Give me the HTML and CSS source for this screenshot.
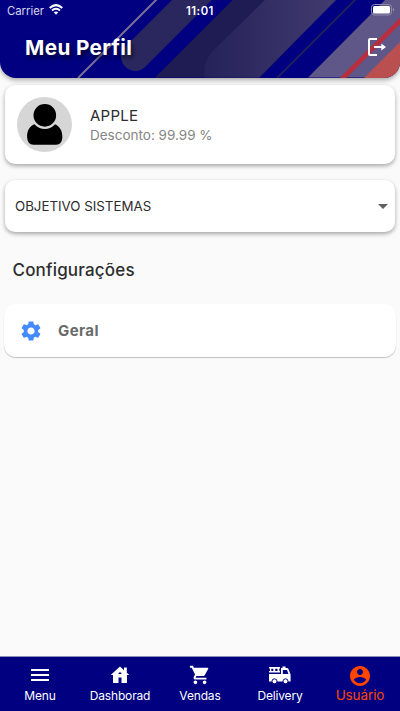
FILE: index.html
```html
<!DOCTYPE html>
<html lang="pt-BR">
<head>
<meta charset="utf-8">
<title>Meu Perfil</title>
<link rel="stylesheet" href="styles.css">
</head>
<body>
<div class="app">
  <header class="header">
    <svg class="header-art" viewBox="0 0 400 77.500" preserveAspectRatio="none" aria-hidden="true">
      <defs>
        <linearGradient id="band" gradientUnits="userSpaceOnUse" x1="204" y1="0" x2="335" y2="0">
          <stop offset="0" stop-color="#25225a"/><stop offset="1" stop-color="#413b6e"/>
        </linearGradient>
      </defs>
      <path d="M157 -1L78 78" stroke="#777096" stroke-width="2"/>
      <path d="M172 0L125.500 46.500A13.800 13.800 0 0 0 145 67L212 0Z" fill="#2a275f"/>
      <path d="M232.500 0L155 77.500H260L335 0Z" fill="#1f1c54"/>
      <path d="M265 0L213 51Q202 63 205 77.500H259L336 0Z" fill="url(#band)"/>
      <path d="M356 -1L277 78" stroke="#1f1c60" stroke-width="2"/>
      <path d="M385 0L308 77.500H400V0Z" fill="#5e5787"/>
      <path d="M402 19L342 79" stroke="#b82e3e" stroke-width="4.600"/>
      <path d="M400 42L364 78H400Z" fill="#b9504f"/>
    </svg>
    <div class="status">
      <span class="carrier">Carrier</span>
      <svg class="wifi" viewBox="0 0 14 11" fill="none" stroke="#fff" stroke-width="2">
        <path d="M.7 4Q7 -1.700 13.300 4M3 6.500Q7 3 11 6.500"/>
        <path d="M4.800 8.300Q7 6.500 9.200 8.300L7 10.700Z" fill="#fff" stroke="none"/>
      </svg>
      <span class="time">11:01</span>
      <svg class="battery" viewBox="0 0 24 12">
        <rect x=".5" y=".5" width="20" height="10.500" rx="3" fill="none" stroke="#8f8aac"/>
        <rect x="2" y="2" width="17" height="7.500" rx="1.500" fill="#fff"/>
        <path d="M22 4Q24 5.700 22 7.500Z" fill="#aaa6c0"/>
      </svg>
    </div>
    <div class="title-row">
      <h1 class="title">Meu Perfil</h1>
      <svg class="logout" viewBox="0 0 18 18" fill="none" stroke="#fff" stroke-width="2">
        <path d="M9 1H2Q1 1 1 2V16Q1 17 2 17H9"/><path d="M6 9H15"/><path d="M13.300 5.500L18 9L13.300 12.500Z" fill="#fff" stroke="none"/>
      </svg>
    </div>
  </header>

  <main class="content">
    <section class="card profile">
      <svg class="avatar" viewBox="0 0 54 54">
        <circle cx="27" cy="27" r="27" fill="#d6d6d6"/>
        <path d="M18 26.500C12 28 9.500 34 10 40Q10.500 46.700 16 47H38.500Q44 46.500 44.500 40C45 34 42 28 36.500 26.500Z"/>
        <circle cx="27.300" cy="18" r="12.200" stroke="#d6d6d6" stroke-width="2.200"/>
      </svg>
      <div class="profile-text">
        <div class="name">APPLE</div>
        <div class="discount">Desconto: 99.99 %</div>
      </div>
    </section>
    <section class="card select">
      <span>OBJETIVO SISTEMAS</span>
      <svg class="caret" viewBox="0 0 10 5"><path d="M0 0H10L5 5Z" fill="#616161"/></svg>
    </section>
    <h2 class="section-title">Configurações</h2>
    <section class="card option">
      <svg class="gear" viewBox="2 2 20 20" fill="#448aff"><path d="M19.140 12.940c.04-.3.060-.61.060-.94 0-.32-.02-.64-.07-.94l2.030-1.580c.18-.14.230-.41.120-.61l-1.920-3.320c-.12-.22-.37-.29-.59-.22l-2.390.96c-.5-.38-1.030-.7-1.620-.94l-.36-2.540c-.04-.24-.24-.41-.48-.41h-3.840c-.24 0-.43.170-.47.410l-.36 2.540c-.59.240-1.130.57-1.620.94l-2.390-.96c-.22-.08-.47 0-.59.220L2.740 8.870c-.12.210-.08.470.12.610l2.030 1.580c-.05.300-.09.630-.09.940s.02.640.07.940l-2.030 1.580c-.18.140-.23.410-.12.610l1.920 3.320c.12.220.37.290.59.220l2.390-.96c.5.380 1.030.7 1.620.94l.36 2.540c.05.240.24.410.48.410h3.840c.24 0 .44-.17.470-.41l.36-2.540c.59-.24 1.130-.56 1.620-.94l2.390.96c.22.080.47 0 .59-.22l1.920-3.320c.12-.22.070-.47-.12-.61l-2.010-1.580zM12 15.600c-1.980 0-3.600-1.620-3.600-3.600s1.620-3.600 3.600-3.600 3.600 1.620 3.600 3.600-1.620 3.600-3.600 3.600z"/></svg>
      <span class="option-label">Geral</span>
    </section>
  </main>

  <nav class="nav">
    <div class="tab">
      <svg viewBox="0 0 24 24"><path d="M3 5H21V7H3ZM3 10H21V12H3ZM3 15H21V17H3Z"/></svg>
      <span>Menu</span>
    </div>
    <div class="tab">
      <svg viewBox="0 0 24 24"><path fill-rule="evenodd" d="M12 2.500L2.700 11H5V19H10.500V13.500H13.500V19H19V11H21.300L18.800 8.700V3.500H16V6.200ZM10.400 10Q10.400 8.200 12 8.200T13.600 10Z"/></svg>
      <span>Dashborad</span>
    </div>
    <div class="tab">
      <svg class="cart" viewBox="0 0 24 24"><path d="M7 18c-1.100 0-1.990.9-1.990 2S5.900 22 7 22s2-.9 2-2-.9-2-2-2zM1 2v2h2l3.600 7.590-1.350 2.450c-.16.280-.25.610-.25.960 0 1.100.9 2 2 2h12v-2H7.420c-.14 0-.25-.11-.25-.25l.03-.12.900-1.630h7.450c.75 0 1.410-.41 1.750-1.030l3.580-6.490A1 1 0 0 0 20 4H5.210l-.94-2H1zm16 16c-1.100 0-1.990.9-1.990 2s.89 2 1.990 2 2-.9 2-2-.9-2-2-2z"/></svg>
      <span>Vendas</span>
    </div>
    <div class="tab">
      <svg viewBox="0 0 24 24"><path fill-rule="evenodd" d="M1 3H12V4.500H11.300V7H12V8.500H1V7H2V4.500H1ZM3.300 4.700V7H5.300V4.700ZM7.200 4.700V7H9.500V4.700ZM13 4H14.500V2.500H17.500V4H19Q20 4 20.400 5L22.600 10.500V17.500H1V10H13ZM14.800 6V10H20.500L19 6Z"/><circle class="wheel" cx="6.500" cy="17.300" r="2.500"/><circle class="wheel" cx="17.500" cy="17.300" r="2.500"/></svg>
      <span>Delivery</span>
    </div>
    <div class="tab active">
      <svg viewBox="0 0 24 24"><path d="M12 2C6.480 2 2 6.480 2 12s4.480 10 10 10 10-4.480 10-10S17.520 2 12 2zm0 3c1.660 0 3 1.340 3 3s-1.340 3-3 3-3-1.340-3-3 1.340-3 3-3zm0 14.200c-2.500 0-4.710-1.280-6-3.220.03-1.990 4-3.080 6-3.080 1.990 0 5.970 1.090 6 3.080-1.290 1.940-3.500 3.220-6 3.220z"/></svg>
      <span>Usuário</span>
    </div>
  </nav>
</div>
</body>
</html>
```

FILE: styles.css
```css
* { box-sizing: border-box; }
body {
  margin: 0;
  background: #fafafa;
  font-family: Inter, "Liberation Sans", sans-serif;
  color: #2d2d2d;
}
svg { display: block; flex: none; }
.app { height: 711px; display: flex; flex-direction: column; overflow: hidden; }
.header {
  position: relative;
  height: 77.500px;
  flex: none;
  background: #000080;
  color: #fff;
  border-radius: 0 0 16px 16px;
  box-shadow: 0 2px 5px rgba(0, 0, 0, .35);
}
.header-art {
  position: absolute;
  inset: 0;
  width: 400px;
  height: 77.500px;
  border-radius: 0 0 16px 16px;
}
.status {
  position: relative;
  height: 21px;
  display: flex;
  align-items: center;
  padding: 0 6px 0 7px;
}
.carrier { width: 42px; font-size: 11.300px; letter-spacing: 0; color: #d8d8ee; }
.wifi { width: 14px; height: 11px; margin-top: -2px; }
.time { margin-left: 123px; width: 34px; font-size: 11.300px; font-weight: 600; letter-spacing: .5px; }
.battery { width: 24px; height: 12px; margin: -1px -1px 0 auto; }
.title-row {
  position: relative;
  height: 52px;
  display: flex;
  align-items: center;
  justify-content: space-between;
  padding: 0 14px 0 25px;
}
.title {
  margin: 0;
  font-size: 20.700px;
  font-weight: 700;
  letter-spacing: .4px;
  text-shadow: 2px 3px 4px rgba(0, 0, 0, .65);
}
.logout { width: 18px; height: 18px; }
.content { flex: 1; padding: 7.500px 5px 0; }
.card {
  display: flex;
  align-items: center;
  background: #fff;
  border-radius: 10px;
  box-shadow: 0 2px 4px rgba(0, 0, 0, .34);
}
.profile { height: 79px; padding-left: 12px; }
.avatar { width: 55px; height: 55px; }
.profile-text { margin: 2px 0 0 18px; }
.name { font-size: 15px; line-height: 20px; letter-spacing: .25px; }
.discount { font-size: 13.500px; line-height: 19px; color: #858585; }
.select {
  height: 52px;
  margin-top: 16px;
  padding: 0 7px 0 10px;
  justify-content: space-between;
  font-size: 13.300px;
}
.caret { width: 10px; height: 5px; }
.section-title {
  margin: 26px 0 0 7.500px;
  font-size: 17px;
  line-height: 24px;
  font-weight: 500;
  letter-spacing: .18px;
}
.option {
  height: 53px;
  margin: 22px -1px 0;
  padding-left: 17px;
  border-radius: 12px;
  box-shadow: 0 1px 1px rgba(0, 0, 0, .24);
}
.gear { width: 20px; height: 20px; }
.option-label { margin-left: 17px; font-size: 15px; font-weight: 700; letter-spacing: .4px; color: #6b6b6b; }
.nav {
  height: 54px;
  flex: none;
  display: grid;
  grid-template-columns: repeat(5, 1fr);
  background: #000080;
  box-shadow: 0 -1px 0 #8c8cb8;
}
.tab {
  display: flex;
  flex-direction: column;
  align-items: center;
  padding-top: 7px;
  color: #fff;
  font-size: 12px;
}
.tab svg { width: 24px; height: 24px; fill: currentColor; }
.tab span { line-height: 16px; white-space: nowrap; letter-spacing: -.15px; }
.tab .cart { width: 22px; height: 22px; margin-bottom: 2px; }
.wheel { stroke: #000080; stroke-width: 1px; }
.active { font-size: 13.500px; color: #ff4500; }
.tab.active span { margin-top: -1px; letter-spacing: -.1px; }
```
